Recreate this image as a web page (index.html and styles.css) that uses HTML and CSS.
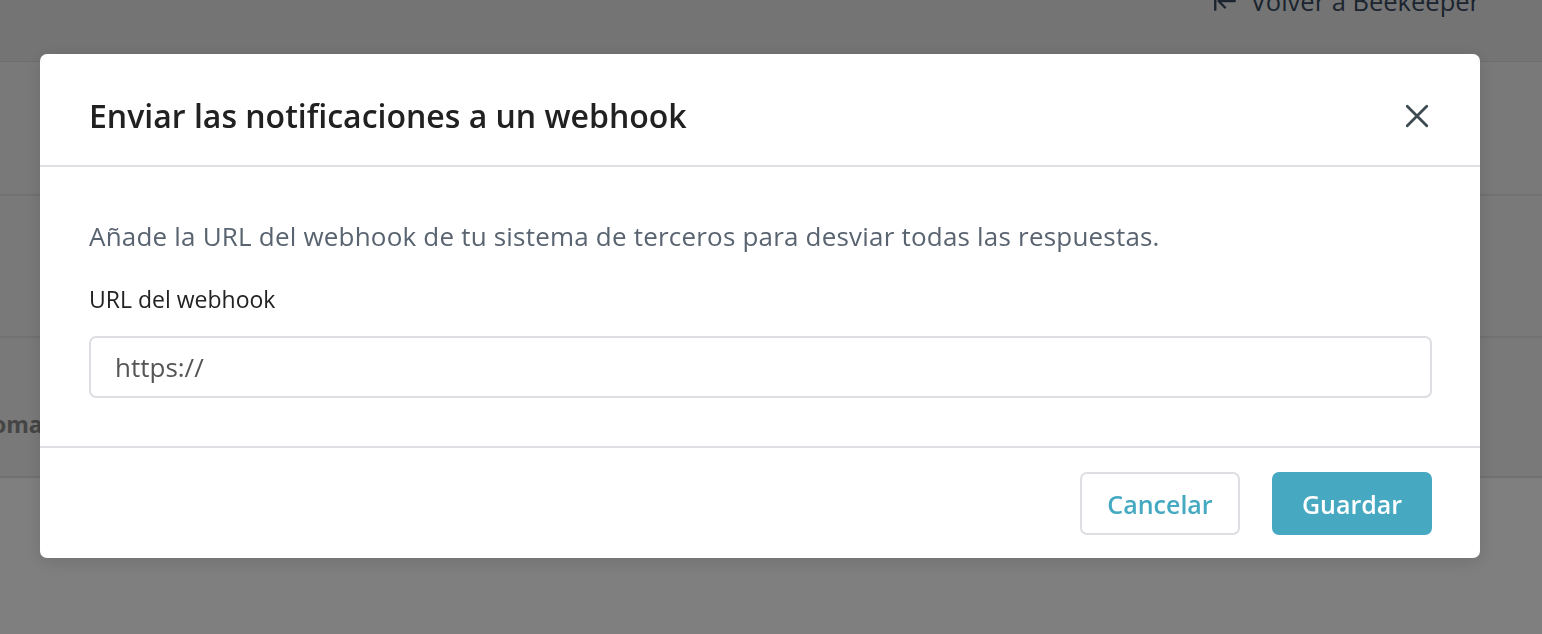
FILE: index.html
```html
<!DOCTYPE html>
<html lang="es">
<head>
    <meta charset="UTF-8">
    <meta name="viewport" content="width=device-width, initial-scale=1.0">
    <title>Webhook</title>
    <link rel="stylesheet" href="styles.css">
</head>
<body>
    <!-- Page behind the dialog -->
    <div class="page">
        <header class="topbar">
            <a class="back-link" href="#">
                <svg class="back-icon" viewBox="0 0 24 24" width="26" height="26">
                    <path d="M3 4v16M21 12H7M12 6l-6 6 6 6" fill="none" stroke="currentColor" stroke-width="2.2" stroke-linecap="round" stroke-linejoin="round"/>
                </svg>
                Volver a Beekeeper
            </a>
        </header>
        <div class="rows">
            <div class="row"></div>
            <div class="row"></div>
            <div class="row row-label"><span>Automatización</span></div>
        </div>
    </div>

    <div class="backdrop"></div>

    <div class="modal-wrap">
        <div class="modal">
            <div class="modal-header">
                <h2 class="modal-title">Enviar las notificaciones a un webhook</h2>
                <button class="close-btn" aria-label="Cerrar">
                    <svg viewBox="0 0 24 24" width="26" height="26">
                        <path d="M3 3l18 18M21 3L3 21" fill="none" stroke="currentColor" stroke-width="2.6" stroke-linecap="round"/>
                    </svg>
                </button>
            </div>
            <div class="modal-body">
                <p class="intro">Añade la URL del webhook de tu sistema de terceros para desviar todas las respuestas.</p>
                <label class="field-label" for="webhook-url">URL del webhook</label>
                <input class="field-input" id="webhook-url" type="text" value="https://">
            </div>
            <div class="modal-footer">
                <button class="btn btn-secondary">Cancelar</button>
                <button class="btn btn-primary">Guardar</button>
            </div>
        </div>
    </div>
</body>
</html>
```

FILE: styles.css
```css
/* Base */
body, html {
    margin: 0;
    padding: 0;
    height: 100%;
    overflow: hidden;
}
body {
    font-family: "Open Sans", Lato, sans-serif;
    background: #fff;
}

/* Background page */
.page {
    height: 100%;
}
.topbar {
    height: 61px;
    background: #e9e9e9;
    border-bottom: 1px solid #dcdcdc;
    display: flex;
    justify-content: flex-end;
    align-items: flex-start;
    padding-right: 62px;
}
.back-link {
    display: flex;
    align-items: center;
    gap: 13px;
    margin-top: -16px;
    color: #38495f;
    text-decoration: none;
    font-size: 25.5px;
}
.back-icon {
    color: #38495f;
    margin-left: 1px;
}
.rows {
    background: #f2f2f2;
}
.row {
    height: 132px;
    border-bottom: 2px solid #e2e2e2;
}
.row + .row {
    height: 140px;
}
.row-label {
    display: flex;
    align-items: center;
    padding-top: 34px;
    box-sizing: border-box;
}
.row-label span {
    margin-left: -49px;
    font-weight: 700;
    font-size: 23px;
    color: #8a8a8a;
}

/* Dim layer */
.backdrop {
    position: fixed;
    inset: 0;
    background: rgba(0, 0, 0, 0.5);
}

/* Dialog */
.modal-wrap {
    position: fixed;
    inset: 0;
    padding: 54px 62px 0 40px;
}
.modal {
    background: #fff;
    border-radius: 7px;
    box-shadow: 0 4px 18px rgba(0, 0, 0, 0.12);
}
.modal-header {
    height: 113px;
    box-sizing: border-box;
    border-bottom: 2px solid #e0e0e4;
    display: flex;
    align-items: center;
    justify-content: space-between;
    padding: 12px 48px 0 49px;
}
.modal-title {
    margin: 0;
    font-size: 32px;
    font-weight: 600;
    color: #212121;
}
.close-btn {
    border: none;
    background: none;
    padding: 0;
    color: #3c4a52;
    cursor: pointer;
    display: flex;
    margin-right: 2px;
}
.modal-body {
    padding: 51px 48px 48px 49px;
    border-bottom: 2px solid #e0e0e4;
}
.intro {
    margin: 0 0 30px;
    font-size: 26px;
    letter-spacing: 0.2px;
    line-height: 36px;
    color: #596470;
}
.field-label {
    display: block;
    font-size: 23px;
    line-height: 30px;
    color: #222;
    margin-bottom: 22px;
}
.field-input {
    box-sizing: border-box;
    width: 100%;
    height: 62px;
    border: 2px solid #dedee2;
    border-radius: 7px;
    padding: 0 24px;
    font-family: inherit;
    font-size: 26px;
    color: #555;
    outline: none;
}
.modal-footer {
    display: flex;
    justify-content: flex-end;
    gap: 32px;
    padding: 24px 48px 23px 48px;
}
.btn {
    box-sizing: border-box;
    width: 160px;
    height: 63px;
    border-radius: 7px;
    font-family: inherit;
    font-size: 25px;
    font-weight: 600;
    cursor: pointer;
}
.btn-secondary {
    background: #fff;
    border: 2px solid #dedee2;
    color: #45a9c1;
}
.btn-primary {
    background: #47a9c1;
    border: 2px solid #47a9c1;
    color: #fff;
}
```
